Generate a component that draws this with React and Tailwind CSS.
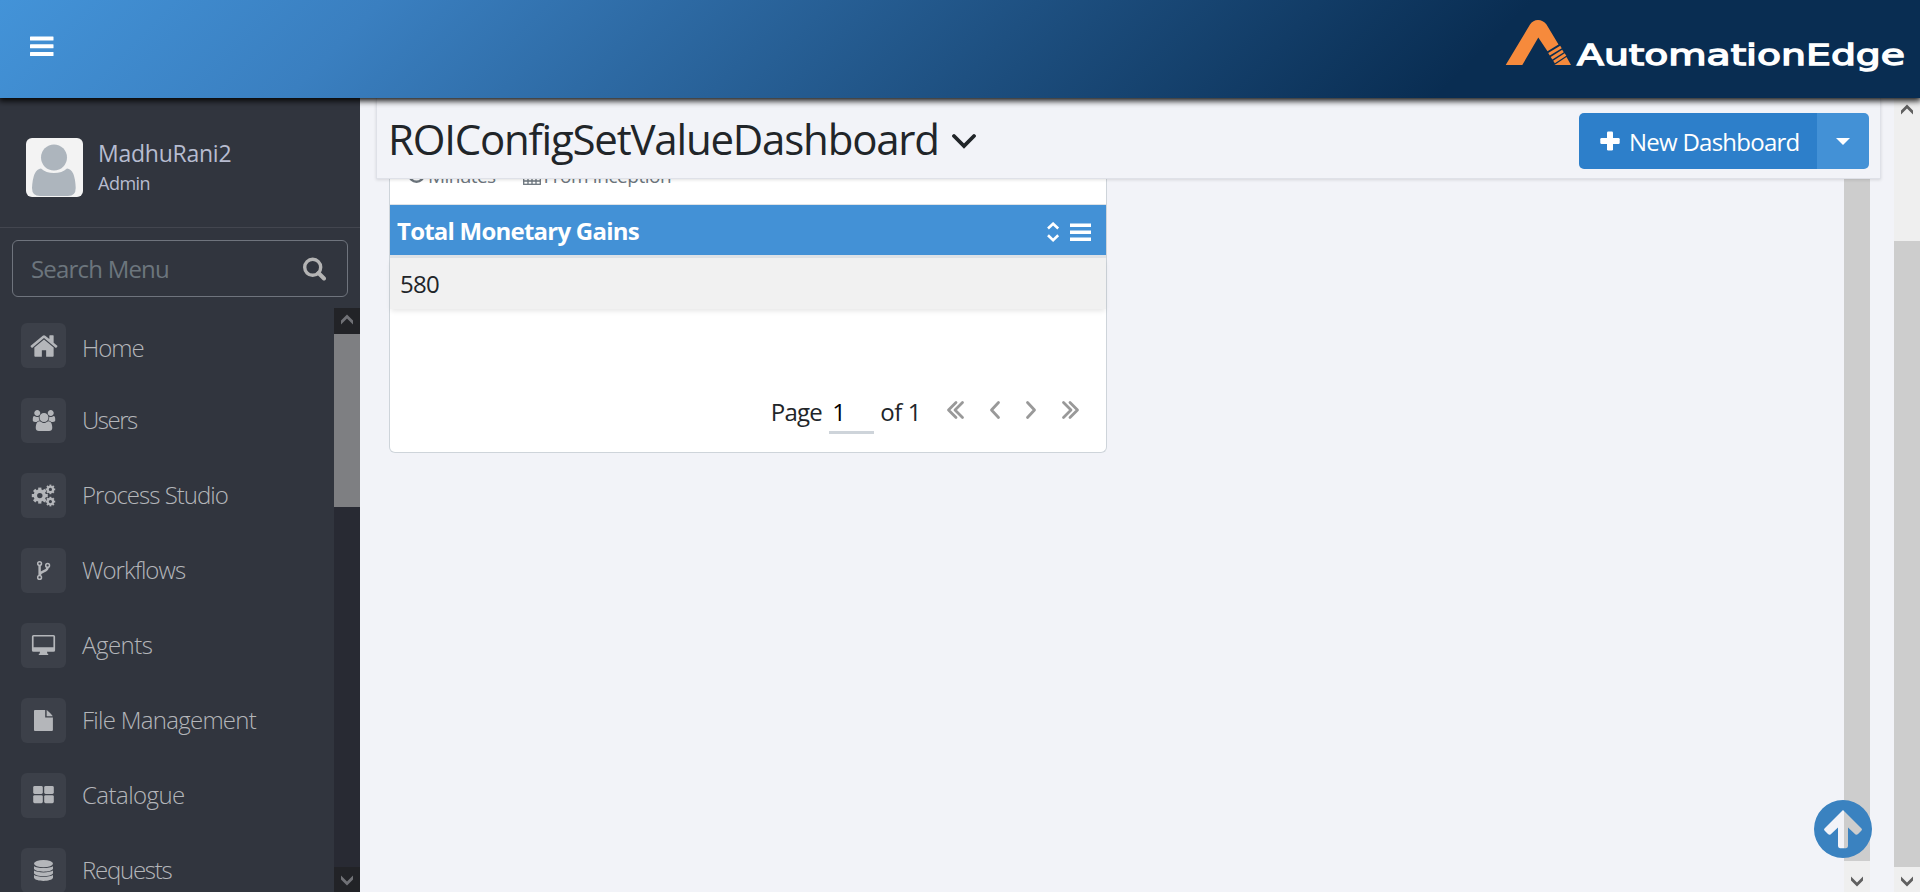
import React from "react";

function Gear({ cx, cy, r, hole, teeth }) {
  const step = 360 / teeth;
  return (
    <g>
      <circle cx={cx} cy={cy} r={(r * 0.78 + hole) / 2} fill="none" stroke="currentColor" strokeWidth={r * 0.78 - hole} />
      {Array.from({ length: teeth }, (_, i) => (
        <rect key={i} x={cx - r * 0.2} y={cy - r} width={r * 0.4} height={r * 0.35} fill="currentColor" transform={`rotate(${i * step} ${cx} ${cy})`} />
      ))}
    </g>
  );
}

const icons = {
  home: (
    <svg className="h-[30px] w-[30px]" viewBox="0 0 1792 1792" fill="currentColor">
      <path d="M1472 992v480q0 26-19 45t-45 19h-384v-384h-256v384h-384q-26 0-45-19t-19-45v-480q0-1 .5-3t.5-3l575-474 575 474q1 2 1 6zm223-69l-62 74q-8 9-21 11h-3q-13 0-21-7l-692-577-692 577q-12 8-24 7-13-2-21-11l-62-74q-8-10-7-23.5t11-21.5l719-599q32-26 76-26t76 26l244 204v-195q0-14 9-23t23-9h192q14 0 23 9t9 23v408l219 182q10 8 11 21.5t-7 23.5z" />
    </svg>
  ),
  users: (
    <svg className="h-[21px] w-[24px]" viewBox="0 0 2048 1792" fill="currentColor">
      <path d="M657 896q-162 5-265 128h-134q-82 0-138-40.5t-56-118.5q0-353 124-353 6 0 43.5 21t97.5 42.5 119 21.5q67 0 133-23-5 37-5 66 0 139 81 256zm1071 637q0 120-73 189.5t-194 69.5h-874q-121 0-194-69.5t-73-189.5q0-53 3.5-103.5t14-109 26.5-108.5 43-97.5 62-81 85.5-53.5 111.5-20q10 0 43 21.5t73 48 107 48 135 21.5 135-21.5 107-48 73-48 43-21.5q61 0 111.5 20t85.5 53.5 62 81 43 97.5 26.5 108.5 14 109 3.5 103.5zm-1024-1277q0 106-75 181t-181 75-181-75-75-181 75-181 181-75 181 75 75 181zm704 384q0 159-112.5 271.5t-271.5 112.5-271.5-112.5-112.5-271.5 112.5-271.5 271.5-112.5 271.5 112.5 112.5 271.5zm576 225q0 78-56 118.5t-138 40.5h-134q-103-123-265-128 81-117 81-256 0-29-5-66 66 23 133 23 59 0 119-21.5t97.5-42.5 43.5-21q124 0 124 353zm-128-609q0 106-75 181t-181 75-181-75-75-181 75-181 181-75 181 75 75 181z" />
    </svg>
  ),
  cogs: (
    <svg className="h-[45px] w-[45px]" viewBox="0 0 45 45">
      <Gear cx={18.8} cy={22.6} r={8} hole={2.7} teeth={8} />
      <Gear cx={29.4} cy={16.4} r={4.8} hole={1.6} teeth={8} />
      <Gear cx={29.4} cy={28.6} r={4.8} hole={1.6} teeth={8} />
    </svg>
  ),
  fork: (
    <svg className="h-[45px] w-[45px]" viewBox="0 0 45 45" fill="none" stroke="currentColor">
      <g strokeWidth="1.500">
        <circle cx="18.600" cy="15.600" r="1.900" />
        <circle cx="18.600" cy="29.400" r="1.900" />
        <circle cx="26.600" cy="17.400" r="1.900" />
      </g>
      <path d="M18.600 17.600V27.400M26.600 19.400C26.600 24 18.800 22.800 18.800 27" strokeWidth="2.400" />
    </svg>
  ),
  desktop: (
    <svg className="h-[45px] w-[45px]" viewBox="0 0 45 45" fill="currentColor">
      <path fillRule="evenodd" d="M12.500 12h20a1.600 1.600 0 0 1 1.600 1.600v13.600a1.600 1.600 0 0 1-1.600 1.600H26l.4 2h.8v1.200h-9.400v-1.200h.8l.4-2h-6.500a1.600 1.600 0 0 1-1.600-1.600V13.600a1.600 1.600 0 0 1 1.600-1.600zM12.600 13.500v10.700h19.800V13.500z" />
    </svg>
  ),
  file: (
    <svg className="h-[45px] w-[45px]" viewBox="0 0 45 45" fill="currentColor">
      <path d="M13.900 12H24.200v7.600h7.700V32a1 1 0 0 1-1 1H13.900a.9.900 0 0 1-.9-.9V12.900a.9.900 0 0 1 .9-.9z" />
      <path d="M25.600 12.100c.8.200 5.700 5.200 6 6.100h-6z" />
    </svg>
  ),
  grid: (
    <svg className="h-[45px] w-[45px]" viewBox="0 0 45 45" fill="currentColor">
      <rect x="12.200" y="13" width="9.600" height="8" rx="1.400" />
      <rect x="23.200" y="13" width="9.600" height="8" rx="1.400" />
      <rect x="12.200" y="22.200" width="9.600" height="8" rx="1.400" />
      <rect x="23.200" y="22.200" width="9.600" height="8" rx="1.400" />
    </svg>
  ),
  database: (
    <svg className="h-[45px] w-[45px]" viewBox="0 0 45 45" fill="currentColor">
      <ellipse cx="22.500" cy="15.600" rx="9.500" ry="3.600" />
      <path d="M13 18.200c3 2.400 16 2.400 19 0v2.600c-1.500 3.800-17.500 3.800-19 0z" />
      <path d="M13 22.600c3 2.400 16 2.400 19 0v2.600c-1.500 3.800-17.500 3.800-19 0z" />
      <path d="M13 27c3 2.400 16 2.400 19 0v2.800c-1.500 4.200-17.500 4.200-19 0z" />
    </svg>
  ),
};

const menu = [
  ["Home", "home", "pt-[3px] tracking-[-1px]"],
  ["Users", "users", "-mt-[3px] tracking-[-1.5px]"],
  ["Process Studio", "cogs", "-mt-[3px] tracking-[-1px]"],
  ["Workflows", "fork", "-mt-[3px] tracking-[-0.95px]"],
  ["Agents", "desktop", "-mt-[3px] tracking-[-0.5px]"],
  ["File Management", "file", "-mt-[3px] tracking-[-0.72px]"],
  ["Catalogue", "grid", "-mt-[3px] tracking-[-0.55px]"],
  ["Requests", "database", "-mt-[3px] tracking-[-1.25px]"],
];

function ScrollArrow({ down, color }) {
  return (
    <svg className={"h-[12px] w-[12px] " + color} viewBox="0 0 12 12" fill="currentColor">
      <path d={down ? "M0 1.500 6 7.500 12 1.500v4L6 11.500 0 5.500z" : "M0 10.500V6.500L6 .500l6 6v4L6 4.500z"} />
    </svg>
  );
}

function Header() {
  return (
    <header className="relative z-20 flex h-[98px] shrink-0 items-center justify-between bg-[linear-gradient(135deg,#4393d8_0%,#3a7fc0_19%,#092d52_76%)] shadow-[0_2px_6px_1px_rgba(0,0,0,0.9)]">
      <svg className="-mt-[6px] ml-[30px] h-[20px] w-[24px]" viewBox="0 0 24 20" fill="#fff">
        <rect y="0.500" width="23.500" height="4" rx="0.500" />
        <rect y="8.300" width="23.500" height="4" rx="0.500" />
        <rect y="16" width="23.500" height="4" rx="0.500" />
      </svg>
      <svg className="h-[98px] w-[420px]" viewBox="1500 0 420 98">
        <path fill="#f68a3c" d="M1505.700 65 1530 24.500Q1533 20 1538 20t8.500 4.500L1558.500 44.500 1547.500 51.200 1538.300 37.500 1522.300 65z" />
        <path stroke="#f68a3c" strokeWidth="3" fill="none" d="M1549 54.300 1561 47M1551.500 58.300 1563 51M1554 62 1565.500 54.500" />
        <path fill="#f68a3c" d="M1554.500 65 1566.500 57 1571 65z" />
        <text x="1577" y="64.500" textLength="328" lengthAdjust="spacingAndGlyphs" fill="#fff" stroke="#fff" strokeWidth="1.300" className="font-['DejaVu_Sans',sans-serif] text-[28px]">AutomationEdge</text>
      </svg>
    </header>
  );
}

function Sidebar() {
  return (
    <aside className="flex w-[360px] shrink-0 flex-col bg-[#31353e]">
      <div className="flex h-[130px] items-start border-b border-[#43464f] pl-[26px] pt-[40px]">
        <svg className="h-[59px] w-[57px] rounded-[6px] bg-[#f3f3f3]" viewBox="0 0 57 59" fill="#adb5bd">
          <circle cx="28" cy="19.500" r="13" />
          <path d="M15 30.500Q20 35 28 35t13-4.500Q49 31 49.700 50 49.700 58 42 58H14Q6 58 6 50 7 31 15 30.500z" />
        </svg>
        <div className="-mt-px ml-[15px]">
          <div className="text-[23px] leading-[32px] tracking-[-0.25px] text-[#b7bcd0]">MadhuRani2</div>
          <div className="text-[18px] leading-[28px] tracking-[-0.5px] text-[#b7bcd0]">Admin</div>
        </div>
      </div>
      <div className="mx-[12px] mt-[12px] flex h-[57px] shrink-0 items-center justify-between rounded-[6px] border border-[#6f747d] pl-[18px] pr-[21px]">
        <span className="mt-px text-[24px] tracking-[-0.8px] text-[#6c757d]">Search Menu</span>
        <svg className="h-[24px] w-[24px] text-[#b4b4b4]" viewBox="0 0 24 24" fill="none" stroke="currentColor">
          <circle cx="10.700" cy="10.300" r="8" strokeWidth="3.400" />
          <path d="M16.500 16l5.500 5.500" strokeWidth="4" strokeLinecap="round" />
        </svg>
      </div>
      <div className="mt-[11px] flex min-h-0 flex-1">
        <nav className="flex min-w-0 flex-1 flex-col gap-[30px] overflow-hidden pl-[21px] pt-[15px] text-[#b4b6ba]">
          {menu.map(([label, icon, fit]) => (
            <div key={label} className="flex h-[45px] shrink-0 items-center">
              <span className="flex h-[45px] w-[45px] items-center justify-center rounded-[6px] bg-[#3c4049]">{icons[icon]}</span>
              <span className={"ml-[16px] text-[24px] font-light leading-[45px] " + fit}>{label}</span>
            </div>
          ))}
        </nav>
        <div className="flex w-[26px] flex-col bg-[#282a33]">
          <div className="flex h-[26px] items-start justify-center bg-[#222327] pt-[6px]"><ScrollArrow color="text-[#707176]" /></div>
          <div className="h-[173px] bg-[#7e7f82]" />
          <div className="flex-1" />
          <div className="flex h-[25px] items-center justify-center bg-[#222327]"><ScrollArrow down color="text-[#707176]" /></div>
        </div>
      </div>
    </aside>
  );
}

function TitleBar() {
  return (
    <div className="relative z-10 ml-[16px] mr-[13px] flex h-[81px] shrink-0 items-start justify-between border-x border-b border-[#dfe1e8] bg-[#f2f3f8] pl-[11px] pr-[11px] pt-[15px] shadow-[0_1px_3px_rgba(0,0,0,0.12)]">
      <div className="flex items-center">
        <h1 className="text-[42px] leading-[52px] tracking-[-1.2px] text-[#212529]">ROIConfigSetValueDashboard</h1>
        <svg className="ml-[13px] mt-[4px] h-[18px] w-[24px]" viewBox="0 0 24 18" fill="none" stroke="#212529" strokeWidth="3.800">
          <path d="M2 4 12 14 22 4" strokeLinecap="round" />
        </svg>
      </div>
      <div className="flex h-[56px] overflow-hidden rounded-[5px] text-white">
        <div className="flex w-[238px] items-center bg-[#2d7fca] pl-[21px]">
          <svg className="h-[20px] w-[20px]" viewBox="0 0 20 20" fill="#fff">
            <rect x="7" y="0.500" width="6" height="19" rx="1.200" />
            <rect x="0.300" y="7" width="19.400" height="6" rx="1.200" />
          </svg>
          <span className="ml-[9px] mt-[2px] text-[24px] tracking-[-0.75px]">New Dashboard</span>
        </div>
        <div className="flex w-[52px] items-center justify-center bg-[#4391d6]">
          <svg className="h-[7px] w-[14px]" viewBox="0 0 14 7" fill="#fff"><path d="M0 0h14L7 7z" /></svg>
        </div>
      </div>
    </div>
  );
}

function Pager() {
  return (
    <div className="flex items-start">
      <span className="text-[24px] leading-[34px] tracking-[-0.7px] text-[#212529]">Page</span>
      <span className="ml-[7px] h-[39px] w-[45px] border-b-[3px] border-[#ced4da] pl-[3px] text-[24px] leading-[34px] text-black">1</span>
      <span className="ml-[6px] text-[24px] leading-[34px] tracking-[-0.4px] text-[#212529]">of 1</span>
      <svg className="ml-[25px] mt-[5px] h-[20px] w-[134px]" viewBox="946 399 134 20" fill="none" stroke="#999" strokeWidth="2.800" strokeLinecap="round" strokeLinejoin="round">
        <path d="M956 401.500 948.500 409 956 416.500M962.500 401.500 955 409 962.500 416.500" />
        <path d="M998.500 401.500 991.500 409 998.500 416.500" />
        <path d="M1027.500 401.500 1034.500 409 1027.500 416.500" />
        <path d="M1063.500 401.500 1071 409 1063.500 416.500M1070 401.500 1077.500 409 1070 416.500" />
      </svg>
    </div>
  );
}

function Card() {
  return (
    <section className="flex h-[274px] w-[718px] shrink-0 flex-col rounded-b-[6px] border border-t-0 border-[#ced4da] bg-white">
      <div className="flex h-[26px] shrink-0 items-end overflow-hidden border-b border-[#dee2e6] pb-[14px] text-[#6c757d]">
        <div className="flex items-end pl-[18px] text-[19px] leading-[28px]">
          <svg className="mb-[7px] h-[17px] w-[17px]" viewBox="0 0 17 17" fill="none" stroke="currentColor" strokeWidth="2.400">
            <circle cx="8.500" cy="8.500" r="7.200" />
            <path d="M8.500 4v5H5" />
          </svg>
          <span className="ml-[3px] tracking-[-0.6px]">Minutes</span>
          <svg className="mb-[5px] ml-[27px] h-[18px] w-[18px]" viewBox="0 0 18 18" fill="none" stroke="currentColor" strokeWidth="1.300">
            <rect x="0.700" y="2.700" width="16.600" height="14.600" />
            <path d="M.7 7h16.600M.7 10.500h16.600M.7 14h16.600M5 7v10M9 7v10M13 7v10" />
          </svg>
          <span className="ml-[3px] tracking-[-0.5px]">From Inception</span>
        </div>
      </div>
      <div className="flex h-[50px] shrink-0 items-center justify-between bg-[#4391d6] pl-[7px] pr-[15px] text-white">
        <span className="mt-[2px] text-[24px] font-bold tracking-[-0.77px]">Total Monetary Gains</span>
        <svg className="mt-[3px] h-[20px] w-[45px]" viewBox="0 0 45 20" fill="none" stroke="#fff">
          <path d="M2 6.500 7.100 1.700 12.200 6.500M2 13.300 7.100 18.200 12.200 13.300" strokeWidth="2.600" />
          <path d="M24 3.200h21M24 10.200h21M24 17.200h21" strokeWidth="3.600" />
        </svg>
      </div>
      <div className="h-[3px] shrink-0 bg-[#dee2e6]" />
      <div className="flex h-[51px] shrink-0 items-center bg-[#f1f1f1] pl-[10px] text-[24px] tracking-[-0.7px] text-[#212529] shadow-[0_3px_5px_-1px_rgba(0,0,0,0.1)]">580</div>
      <div className="flex flex-1 items-end justify-end pb-[18px] pr-[26px]">
        <Pager />
      </div>
    </section>
  );
}

export default function App() {
  return (
    <div className="flex h-[892px] w-[1920px] flex-col overflow-hidden bg-[#f2f3f8] font-['Open_Sans','Noto_Sans',sans-serif]">
      <Header />
      <div className="flex min-h-0 flex-1">
        <Sidebar />
        <main className="relative flex min-w-0 flex-1 flex-col">
          <TitleBar />
          <div className="flex min-h-0 flex-1 justify-between pl-[29px] pr-[24px]">
            <Card />
            <div className="flex w-[26px] flex-col bg-[#efefef]">
              <div className="flex-1 bg-[#cdcdcd]" />
              <div className="flex h-[31px] items-center justify-center pt-[8px]"><ScrollArrow down color="text-[#606060]" /></div>
            </div>
          </div>
          <svg className="absolute bottom-[34px] right-[22px] h-[58px] w-[58px]" viewBox="0 0 58 58" fill="#3a82c0">
            <path fillRule="evenodd" d="M29 0a29 29 0 1 1 0 58a29 29 0 1 1 0-58zM29 10 10.500 28.500Q9.500 29.500 10.500 30.500L14 34Q15 35 16.500 34.500L24 27.500V46Q24 48 26 48.200H32Q34 48 34 46V27.500L41.500 34.500Q43 35 44 34L47.500 30.500Q48.500 29.500 47.500 28.500z" />
          </svg>
        </main>
        <div className="flex w-[26px] shrink-0 flex-col bg-[#efefef]">
          <div className="flex h-[143px] justify-center pt-[6px]"><ScrollArrow color="text-[#606060]" /></div>
          <div className="flex-1 bg-[#cdcdcd]" />
          <div className="flex h-[25px] items-center justify-center pt-[2px]"><ScrollArrow down color="text-[#606060]" /></div>
        </div>
      </div>
    </div>
  );
}
